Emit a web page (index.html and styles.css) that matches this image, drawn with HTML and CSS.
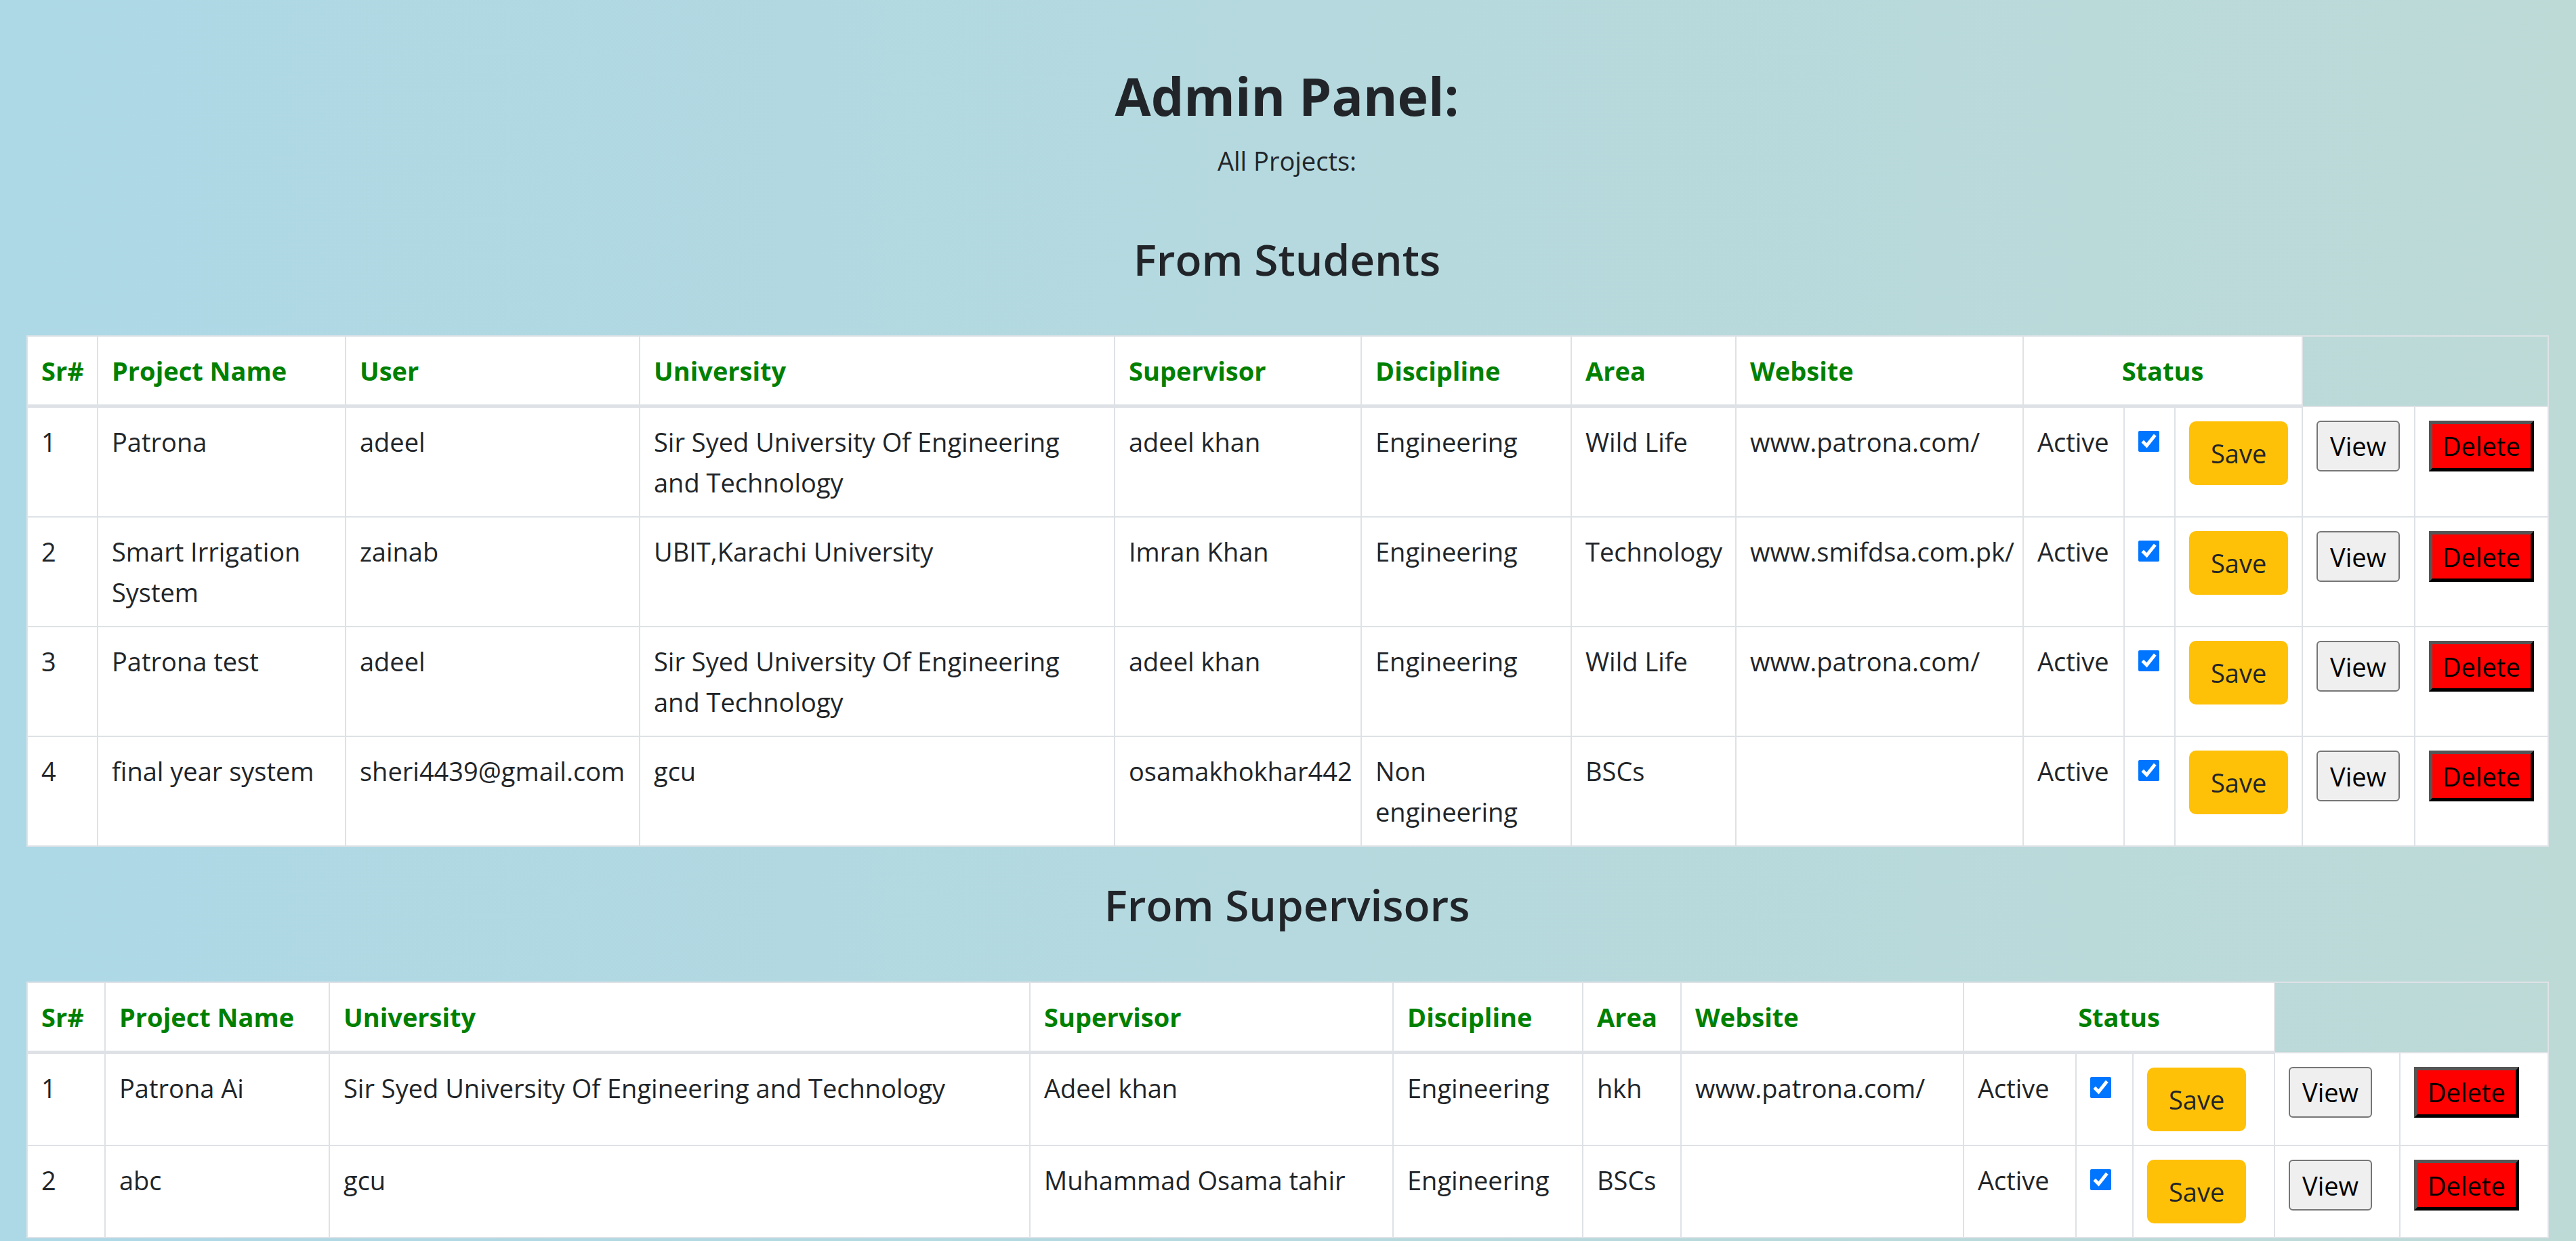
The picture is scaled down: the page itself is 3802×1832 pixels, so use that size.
FILE: index.html
```html
<!DOCTYPE html>
<html lang="en">
<head>
<meta charset="utf-8">
<title>Admin Panel</title>
<link rel="stylesheet" href="styles.css">
</head>
<body>
<main class="page">
  <header class="page-head">
    <h1 class="title">Admin Panel:</h1>
    <p class="subtitle">All Projects:</p>
  </header>

  <section class="block">
    <h2 class="block-title">From Students</h2>
    <table class="grid students">
      <colgroup>
        <col><col><col><col><col><col><col><col><col><col><col><col><col>
      </colgroup>
      <thead>
        <tr>
          <th>Sr#</th>
          <th>Project Name</th>
          <th>User</th>
          <th>University</th>
          <th>Supervisor</th>
          <th>Discipline</th>
          <th>Area</th>
          <th>Website</th>
          <th colspan="3" class="center">Status</th>
        </tr>
      </thead>
      <tbody>
        <tr>
          <td>1</td>
          <td>Patrona</td>
          <td>adeel</td>
          <td>Sir Syed University Of Engineering and Technology</td>
          <td>adeel khan</td>
          <td>Engineering</td>
          <td>Wild Life</td>
          <td>www.patrona.com/</td>
          <td>Active</td>
          <td><input class="check" type="checkbox" checked></td>
          <td><button class="btn btn-save" type="button">Save</button></td>
          <td><button class="btn btn-view" type="button">View</button></td>
          <td><button class="btn btn-delete" type="button">Delete</button></td>
        </tr>
        <tr>
          <td>2</td>
          <td>Smart Irrigation System</td>
          <td>zainab</td>
          <td>UBIT,Karachi University</td>
          <td>Imran Khan</td>
          <td>Engineering</td>
          <td>Technology</td>
          <td>www.smifdsa.com.pk/</td>
          <td>Active</td>
          <td><input class="check" type="checkbox" checked></td>
          <td><button class="btn btn-save" type="button">Save</button></td>
          <td><button class="btn btn-view" type="button">View</button></td>
          <td><button class="btn btn-delete" type="button">Delete</button></td>
        </tr>
        <tr>
          <td>3</td>
          <td>Patrona test</td>
          <td>adeel</td>
          <td>Sir Syed University Of Engineering and Technology</td>
          <td>adeel khan</td>
          <td>Engineering</td>
          <td>Wild Life</td>
          <td>www.patrona.com/</td>
          <td>Active</td>
          <td><input class="check" type="checkbox" checked></td>
          <td><button class="btn btn-save" type="button">Save</button></td>
          <td><button class="btn btn-view" type="button">View</button></td>
          <td><button class="btn btn-delete" type="button">Delete</button></td>
        </tr>
        <tr>
          <td>4</td>
          <td>final year system</td>
          <td>sheri4439@gmail.com</td>
          <td>gcu</td>
          <td>osamakhokhar442</td>
          <td>Non engineering</td>
          <td>BSCs</td>
          <td></td>
          <td>Active</td>
          <td><input class="check" type="checkbox" checked></td>
          <td><button class="btn btn-save" type="button">Save</button></td>
          <td><button class="btn btn-view" type="button">View</button></td>
          <td><button class="btn btn-delete" type="button">Delete</button></td>
        </tr>
      </tbody>
    </table>
  </section>

  <section class="block">
    <h2 class="block-title block-title-next">From Supervisors</h2>
    <table class="grid supervisors">
      <colgroup>
        <col><col><col><col><col><col><col><col><col><col><col><col>
      </colgroup>
      <thead>
        <tr>
          <th>Sr#</th>
          <th>Project Name</th>
          <th>University</th>
          <th>Supervisor</th>
          <th>Discipline</th>
          <th>Area</th>
          <th>Website</th>
          <th colspan="3" class="center">Status</th>
        </tr>
      </thead>
      <tbody>
        <tr>
          <td>1</td>
          <td>Patrona Ai</td>
          <td>Sir Syed University Of Engineering and Technology</td>
          <td>Adeel khan</td>
          <td>Engineering</td>
          <td>hkh</td>
          <td>www.patrona.com/</td>
          <td>Active</td>
          <td><input class="check" type="checkbox" checked></td>
          <td><button class="btn btn-save" type="button">Save</button></td>
          <td><button class="btn btn-view" type="button">View</button></td>
          <td><button class="btn btn-delete" type="button">Delete</button></td>
        </tr>
        <tr>
          <td>2</td>
          <td>abc</td>
          <td>gcu</td>
          <td>Muhammad Osama tahir</td>
          <td>Engineering</td>
          <td>BSCs</td>
          <td></td>
          <td>Active</td>
          <td><input class="check" type="checkbox" checked></td>
          <td><button class="btn btn-save" type="button">Save</button></td>
          <td><button class="btn btn-view" type="button">View</button></td>
          <td><button class="btn btn-delete" type="button">Delete</button></td>
        </tr>
      </tbody>
    </table>
  </section>
</main>
</body>
</html>
```

FILE: styles.css
```css
html {
  min-height: 100%;
  background: linear-gradient(to right, #add8e6, #bddad7);
}

body {
  margin: 0;
  font-family: "Open Sans", "Noto Sans", sans-serif;
  font-size: 38px;
  line-height: 60px;
  color: #212529;
}

.page {
  padding: 96px 42px 0 39px;
}

.title {
  margin: 0 0 19px;
  font-size: 77px;
  line-height: 92px;
  font-weight: 700;
  text-align: center;
}

.subtitle {
  margin: 0 0 76px;
  text-align: center;
}

.block-title {
  margin: 0 0 73px;
  font-size: 64px;
  line-height: 79px;
  font-weight: 600;
  text-align: center;
}

.block-title-next {
  margin-top: 46px;
  margin-bottom: 74px;
}

.grid {
  width: 100%;
  table-layout: fixed;
  border-collapse: collapse;
  border: 2px solid #dee2e6;
}

.grid th,
.grid td {
  padding: 20px;
  border: 2px solid #dee2e6;
  background: #fff;
  text-align: left;
  vertical-align: top;
}

.grid th {
  color: #008000;
  font-weight: 700;
  border-bottom-width: 5px;
}

.grid th.center {
  text-align: center;
}

/* column widths: students table */
.students col:nth-child(1) { width: 104px; }
.students col:nth-child(2) { width: 366px; }
.students col:nth-child(3) { width: 434px; }
.students col:nth-child(4) { width: 701px; }
.students col:nth-child(5) { width: 364px; }
.students col:nth-child(6) { width: 310px; }
.students col:nth-child(7) { width: 243px; }
.students col:nth-child(8) { width: 424px; }
.students col:nth-child(9) { width: 149px; }
.students col:nth-child(10) { width: 75px; }
.students col:nth-child(11) { width: 188px; }
.students col:nth-child(12) { width: 166px; }
.students col:nth-child(13) { width: 197px; }

/* column widths: supervisors table */
.supervisors col:nth-child(1) { width: 115px; }
.supervisors col:nth-child(2) { width: 331px; }
.supervisors col:nth-child(3) { width: 1034px; }
.supervisors col:nth-child(4) { width: 536px; }
.supervisors col:nth-child(5) { width: 280px; }
.supervisors col:nth-child(6) { width: 145px; }
.supervisors col:nth-child(7) { width: 417px; }
.supervisors col:nth-child(8) { width: 166px; }
.supervisors col:nth-child(9) { width: 84px; }
.supervisors col:nth-child(10) { width: 209px; }
.supervisors col:nth-child(11) { width: 185px; }
.supervisors col:nth-child(12) { width: 219px; }

.check {
  width: 31px;
  height: 31px;
  margin: 14px 0 0;
  vertical-align: top;
  accent-color: #0075ff;
}

.btn {
  font-family: inherit;
  font-size: 38px;
  line-height: 60px;
  vertical-align: top;
  margin: 0;
  cursor: pointer;
}

.btn-save {
  padding: 15px 30px;
  color: #212529;
  background: #ffc107;
  border: 2px solid #ffc107;
  border-radius: 10px;
}

.btn-view {
  padding: 5.5px 18px;
  color: #000;
  background: #efefef;
  border: 2px solid #767676;
  border-radius: 6px;
}

.btn-delete {
  padding: 2.5px 15px;
  color: #000;
  background: #f00;
  border: 5px solid;
  border-color: #555 #000 #000 #555;
  border-radius: 0;
}
```
